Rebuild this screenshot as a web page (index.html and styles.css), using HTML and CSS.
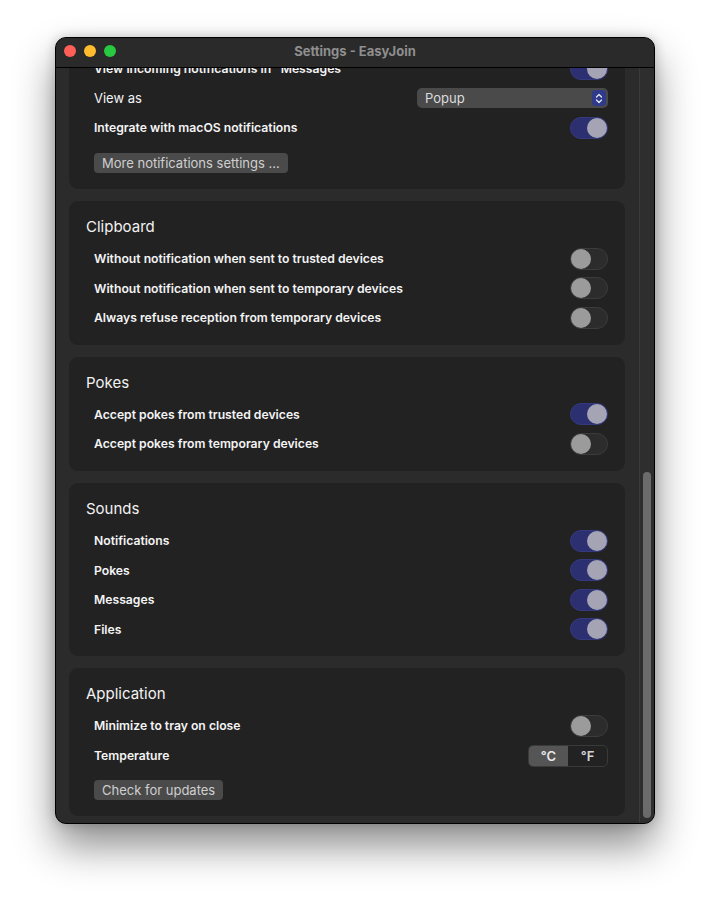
FILE: index.html
```html
<!DOCTYPE html>
<html>
<head>
    <title>Settings - EasyJoin</title>
    <link rel="stylesheet" href="styles.css">
</head>
<body>
    <div class="window">
        <div class="titlebar">
            <div class="lights">
                <span class="light red"></span>
                <span class="light yellow"></span>
                <span class="light green"></span>
            </div>
            <div class="win-title">Settings - EasyJoin</div>
        </div>
        <div class="body">
            <div class="scroll">
                <div class="cards">
                    <section class="card">
                        <h2 class="card-title">Notifications</h2>
                        <div class="row">
                            <span class="label">View incoming notifications in "Messages"</span>
                            <span class="toggle on"></span>
                        </div>
                        <div class="row">
                            <span class="label plain">View as</span>
                            <div class="select">
                                <span>Popup</span>
                                <span class="stepper">
                                    <svg width="8" height="11" viewBox="0 0 8 11"><path d="M1.5 4 L4 1.5 L6.5 4 M1.5 7 L4 9.5 L6.5 7" fill="none" stroke="#e6e6f0" stroke-width="1.3" stroke-linecap="round" stroke-linejoin="round"/></svg>
                                </span>
                            </div>
                        </div>
                        <div class="row">
                            <span class="label">Integrate with macOS notifications</span>
                            <span class="toggle on"></span>
                        </div>
                        <div class="btn-row"><button class="btn">More notifications settings ...</button></div>
                    </section>

                    <section class="card">
                        <h2 class="card-title">Clipboard</h2>
                        <div class="row">
                            <span class="label">Without notification when sent to trusted devices</span>
                            <span class="toggle"></span>
                        </div>
                        <div class="row">
                            <span class="label">Without notification when sent to temporary devices</span>
                            <span class="toggle"></span>
                        </div>
                        <div class="row">
                            <span class="label">Always refuse reception from temporary devices</span>
                            <span class="toggle"></span>
                        </div>
                    </section>

                    <section class="card">
                        <h2 class="card-title">Pokes</h2>
                        <div class="row">
                            <span class="label">Accept pokes from trusted devices</span>
                            <span class="toggle on"></span>
                        </div>
                        <div class="row">
                            <span class="label">Accept pokes from temporary devices</span>
                            <span class="toggle"></span>
                        </div>
                    </section>

                    <section class="card">
                        <h2 class="card-title">Sounds</h2>
                        <div class="row">
                            <span class="label">Notifications</span>
                            <span class="toggle on"></span>
                        </div>
                        <div class="row">
                            <span class="label">Pokes</span>
                            <span class="toggle on"></span>
                        </div>
                        <div class="row">
                            <span class="label">Messages</span>
                            <span class="toggle on"></span>
                        </div>
                        <div class="row">
                            <span class="label">Files</span>
                            <span class="toggle on"></span>
                        </div>
                    </section>

                    <section class="card">
                        <h2 class="card-title">Application</h2>
                        <div class="row">
                            <span class="label">Minimize to tray on close</span>
                            <span class="toggle"></span>
                        </div>
                        <div class="row">
                            <span class="label">Temperature</span>
                            <div class="segmented">
                                <span class="seg selected">°C</span>
                                <span class="seg">°F</span>
                            </div>
                        </div>
                        <div class="btn-row"><button class="btn">Check for updates</button></div>
                    </section>
                </div>
            </div>
            <div class="scrollbar"><div class="thumb"></div></div>
        </div>
    </div>
</body>
</html>
```

FILE: styles.css
```css
body {
    margin: 0;
    padding: 37px 0 74px 55px;
    background-color: white;
    font-family: Inter, "Noto Sans", sans-serif;
}
.window {
    box-sizing: border-box;
    width: 600px;
    height: 787px;
    border: 1px solid #000;
    border-radius: 11px;
    overflow: hidden;
    background-color: #2b2b2b;
    box-shadow: 0 22px 40px rgba(0, 0, 0, 0.45), 0 0 12px rgba(0, 0, 0, 0.2);
    display: flex;
    flex-direction: column;
}
.titlebar {
    box-sizing: border-box;
    height: 30px;
    padding-bottom: 3px;
    border-bottom: 1px solid #000;
    background-color: #2a2a2a;
    display: flex;
    align-items: center;
    position: relative;
}
.lights {
    display: flex;
    gap: 8px;
    padding-left: 8px;
}
.light {
    width: 12px;
    height: 12px;
    border-radius: 50%;
}
.red { background-color: #fe5f57; }
.yellow { background-color: #febc2e; }
.green { background-color: #28c840; }
.win-title {
    position: absolute;
    left: 0;
    right: 0;
    text-align: center;
    color: #8f8f8f;
    font-size: 13px;
    font-weight: 700;
}
.body {
    flex: 1;
    display: flex;
    min-height: 0;
}
.scroll {
    flex: 1;
    overflow: hidden;
}
.cards {
    margin-top: -57px;
    padding: 0 14px 0 13px;
    display: flex;
    flex-direction: column;
    gap: 12px;
}
.card {
    background-color: #222222;
    border-radius: 9px;
    padding: 16px 17px 12px 17px;
}
.card-title {
    margin: 0 0 7px 0;
    font-size: 15px;
    line-height: 20px;
    font-weight: 400;
    color: #f2f2f2;
}
.row {
    height: 29.6px;
    display: flex;
    align-items: center;
    justify-content: space-between;
    padding-left: 8px;
}
.label {
    color: #f4f4f4;
    font-size: 12.2px;
    font-weight: 600;
}
.label.plain {
    font-weight: 400;
    font-size: 13px;
}
.toggle {
    box-sizing: border-box;
    width: 38px;
    height: 22px;
    border-radius: 11px;
    border: 1px solid #3c3c3c;
    background-color: #2c2c2c;
    display: flex;
    align-items: center;
}
.toggle::after {
    content: "";
    width: 20px;
    height: 20px;
    border-radius: 50%;
    background-color: #9b9b9b;
}
.toggle.on {
    background-color: #2c3070;
    border-color: #353a80;
    justify-content: flex-end;
}
.toggle.on::after {
    background-color: #a4a4b4;
}
.select {
    box-sizing: border-box;
    width: 191px;
    height: 20px;
    border-radius: 5px;
    background-color: #4a4a4a;
    display: flex;
    align-items: center;
    justify-content: space-between;
    padding: 0 2px 0 8px;
    color: #dcdcdc;
    font-size: 13px;
}
.stepper {
    width: 14px;
    height: 16px;
    border-radius: 4px;
    background-color: #2f3a8a;
    display: flex;
    align-items: center;
    justify-content: center;
}
.btn-row {
    display: flex;
    margin: 10px 0 4px 0;
    padding-left: 8px;
}
.btn {
    font-family: inherit;
    font-size: 13px;
    color: #cfcfcf;
    background-color: #4a4a4a;
    border: none;
    border-radius: 4px;
    height: 20px;
    padding: 0 8px;
}
.segmented {
    box-sizing: border-box;
    width: 80px;
    height: 22px;
    border: 1px solid #3a3a3a;
    border-radius: 5px;
    display: flex;
    overflow: hidden;
}
.seg {
    flex: 1;
    display: flex;
    align-items: center;
    justify-content: center;
    color: #d6d6d6;
    font-size: 13px;
    font-weight: 600;
}
.seg.selected {
    background-color: #555555;
    color: #e8e8e8;
}
.scrollbar {
    width: 14px;
    border-left: 1px solid #3a3a3a;
    background-color: #2e2e2e;
}
.thumb {
    width: 8px;
    height: 346px;
    margin: 404px 0 0 3px;
    border-radius: 4px;
    background-color: #6b6b6b;
}
```
